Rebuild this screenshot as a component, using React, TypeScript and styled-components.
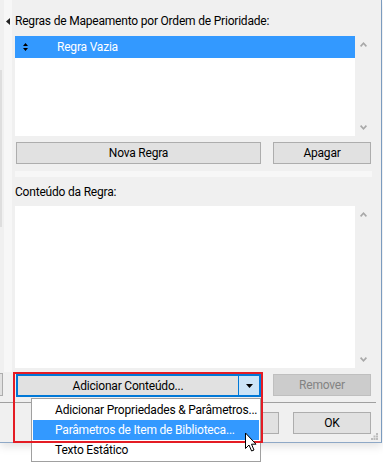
import React from "react";
import styled, { createGlobalStyle } from "styled-components";

const Global = createGlobalStyle`
  html, body { margin: 0; padding: 0; background: #ffffff; }
  body { font-family: Roboto, "Segoe UI", sans-serif; font-size: 12px; letter-spacing: -0.2px; color: #000000; }
  * { box-sizing: border-box; }
`;

const Page = styled.div`
  position: relative;
  width: 383px;
  height: 462px;
  overflow: hidden;
  background: #ffffff;
`;

const Window = styled.div`
  width: 382px;
  height: 443px;
  background: #f0f0f0;
  border-right: 1px solid #7b9bbf;
  border-bottom: 1px solid #8ea8c6;
  box-shadow: 0 3px 9px rgba(0, 0, 0, 0.13);
  display: flex;
  flex-direction: column;
`;

const TopArea = styled.div`
  display: flex;
  height: 402px;
`;

const LeftPanel = styled.div`
  width: 15px;
  display: flex;
  flex-shrink: 0;
`;

const Edge = styled.div`
  width: 4px;
  display: flex;
  flex-direction: column;
`;

const EdgeLine = styled.div`
  margin-top: 70px;
  height: 157px;
  width: 2px;
  background: #dedede;
`;

const Spacer = styled.div`
  flex: 1;
`;

const StubButton = styled.div`
  width: 3px;
  height: 23px;
  margin-bottom: 6px;
  background: #e1e1e1;
  border: 1px solid #adadad;
  border-left: none;
`;

const Strip = styled.div`
  width: 8px;
  height: 372px;
  background: #f7f7f7;
  display: flex;
  justify-content: center;
  padding-top: 18px;
`;

const Main = styled.div`
  flex: 1;
  display: flex;
  flex-direction: column;
  padding-top: 13px;
`;

const Label = styled.div<{ $mt?: number }>`
  height: 16px;
  line-height: 16px;
  margin-top: ${(p) => p.$mt ?? 0}px;
  white-space: nowrap;
`;

const ListRow = styled.div<{ $h: number; $mt: number }>`
  display: flex;
  height: ${(p) => p.$h}px;
  margin-top: ${(p) => p.$mt}px;
`;

const ListBox = styled.div`
  width: 340px;
  background: #ffffff;
  display: flex;
  flex-direction: column;
`;

const SelectedRow = styled.div`
  height: 22px;
  background: #3399ff;
  color: #ffffff;
  display: flex;
  align-items: center;
  padding-left: 8px;
`;

const RowText = styled.span`
  margin-left: 29px;
  line-height: 16px;
`;

const ScrollBar = styled.div`
  width: 23px;
  display: flex;
  flex-direction: column;
  justify-content: space-between;
  padding: 6px 0 6px 5px;
`;

const ButtonRow = styled.div<{ $mt: number }>`
  display: flex;
  gap: 12px;
  margin-top: ${(p) => p.$mt}px;
  padding-left: 1px;
`;

const Button = styled.div<{ $w: number; $disabled?: boolean }>`
  width: ${(p) => p.$w}px;
  height: 22px;
  background: ${(p) => (p.$disabled ? "#cccccc" : "#e1e1e1")};
  border: 1px solid ${(p) => (p.$disabled ? "#bfbfbf" : "#adadad")};
  color: ${(p) => (p.$disabled ? "#838383" : "#000000")};
  display: flex;
  align-items: center;
  justify-content: center;
  white-space: nowrap;
`;

const SplitButton = styled.div`
  width: 245px;
  height: 23px;
  border: 2px solid #0078d7;
  display: flex;
`;

const SplitMain = styled.div`
  flex: 1;
  background: #e1e1e1;
  display: flex;
  align-items: center;
  justify-content: center;
  white-space: nowrap;
`;

const SplitArrow = styled.div`
  width: 21px;
  background: #cce4f7;
  border-left: 1px solid #0078d7;
  display: flex;
  align-items: center;
  justify-content: center;
`;

const Band = styled.div`
  margin-top: 7px;
  height: 6px;
  width: 357px;
  background: #f7f7f7;
`;

const Divider = styled.div`
  height: 1px;
  width: 376px;
  background: #a0a0a0;
`;

const Footer = styled.div`
  position: relative;
  flex: 1;
  display: flex;
  justify-content: flex-end;
  gap: 14px;
  padding: 9px 10px 0 0;
`;

const Grip = styled.svg`
  position: absolute;
  right: 3px;
  bottom: 2px;
`;

const Menu = styled.div`
  position: absolute;
  left: 31px;
  top: 398px;
  width: 230px;
  height: 64px;
  background: #ffffff;
  border: 1px solid #a0a0a0;
  padding: 1px 1px 0 1px;
  display: flex;
  flex-direction: column;
`;

const MenuItem = styled.div<{ $active?: boolean }>`
  height: 20px;
  display: flex;
  align-items: center;
  padding-left: 22px;
  white-space: nowrap;
  background: ${(p) => (p.$active ? "#3399ff" : "transparent")};
  color: ${(p) => (p.$active ? "#ffffff" : "#000000")};
`;

const Highlight = styled.div`
  position: absolute;
  left: 13px;
  top: 372px;
  width: 250px;
  height: 71px;
  border: 2px solid #e41c24;
`;

const Cursor = styled.svg`
  position: absolute;
  left: 244px;
  top: 432px;
`;

const Chevron = ({ up }: { up?: boolean }) => (
  <svg width="7" height="5" viewBox="0 0 7 5">
    <path
      d={up ? "M0.6 4.4 L3.5 1.2 L6.4 4.4" : "M0.6 0.6 L3.5 3.8 L6.4 0.6"}
      fill="none"
      stroke="#a8a8a8"
      strokeWidth="1.6"
    />
  </svg>
);

export default function App() {
  return (
    <Page>
      <Global />
      <Window>
        <TopArea>
          <LeftPanel>
            <Edge>
              <EdgeLine />
              <Spacer />
              <StubButton />
            </Edge>
            <Strip>
              <svg width="4" height="7" viewBox="0 0 4 7">
                <path d="M4 0 L4 7 L0 3.5 Z" fill="#222" />
              </svg>
            </Strip>
          </LeftPanel>
          <Main>
            <Label>Regras de Mapeamento por Ordem de Prioridade:</Label>
            <ListRow $h={100} $mt={7}>
              <ListBox>
                <SelectedRow>
                  <svg width="5" height="8" viewBox="0 0 5 8">
                    <path d="M2.5 0 L5 3 L0 3 Z M0 5 L5 5 L2.5 8 Z" fill="#000" />
                  </svg>
                  <RowText>Regra Vazia</RowText>
                </SelectedRow>
              </ListBox>
              <ScrollBar>
                <Chevron up />
                <Chevron />
              </ScrollBar>
            </ListRow>
            <ButtonRow $mt={6}>
              <Button $w={245}>Nova Regra</Button>
              <Button $w={98}>Apagar</Button>
            </ButtonRow>
            <Band />
            <Label $mt={7}>Conteúdo da Regra:</Label>
            <ListRow $h={162} $mt={6}>
              <ListBox />
              <ScrollBar>
                <Chevron up />
                <Chevron />
              </ScrollBar>
            </ListRow>
            <ButtonRow $mt={6}>
              <SplitButton>
                <SplitMain>Adicionar Conteúdo...</SplitMain>
                <SplitArrow>
                  <svg width="7" height="4" viewBox="0 0 7 4">
                    <path d="M0 0 L7 0 L3.5 4 Z" fill="#000" />
                  </svg>
                </SplitArrow>
              </SplitButton>
              <Button $w={98} $disabled>
                Remover
              </Button>
            </ButtonRow>
          </Main>
        </TopArea>
        <Divider />
        <Footer>
          <Button $w={78} aria-label="Cancelar" />
          <Button $w={78}>OK</Button>
          <Grip width="7" height="7" viewBox="0 0 7 7">
            <rect x="5" y="0" width="2" height="2" fill="#bcbcbc" />
            <rect x="2.5" y="2.5" width="2" height="2" fill="#bcbcbc" />
            <rect x="5" y="2.5" width="2" height="2" fill="#bcbcbc" />
            <rect x="0" y="5" width="2" height="2" fill="#bcbcbc" />
            <rect x="2.5" y="5" width="2" height="2" fill="#bcbcbc" />
            <rect x="5" y="5" width="2" height="2" fill="#bcbcbc" />
          </Grip>
        </Footer>
      </Window>
      <Menu>
        <MenuItem>Adicionar Propriedades &amp; Parâmetros...</MenuItem>
        <MenuItem $active>Parâmetros de Item de Biblioteca...</MenuItem>
        <MenuItem>Texto Estático</MenuItem>
      </Menu>
      <Highlight />
      <Cursor width="13" height="21" viewBox="0 0 13 21">
        <path
          d="M1.5 1 L1.5 16.5 L5 13 L7.6 19 L10 18 L7.5 12.2 L12 12.2 Z"
          fill="#ffffff"
          stroke="#000000"
          strokeWidth="1"
          strokeLinejoin="miter"
        />
      </Cursor>
    </Page>
  );
}
